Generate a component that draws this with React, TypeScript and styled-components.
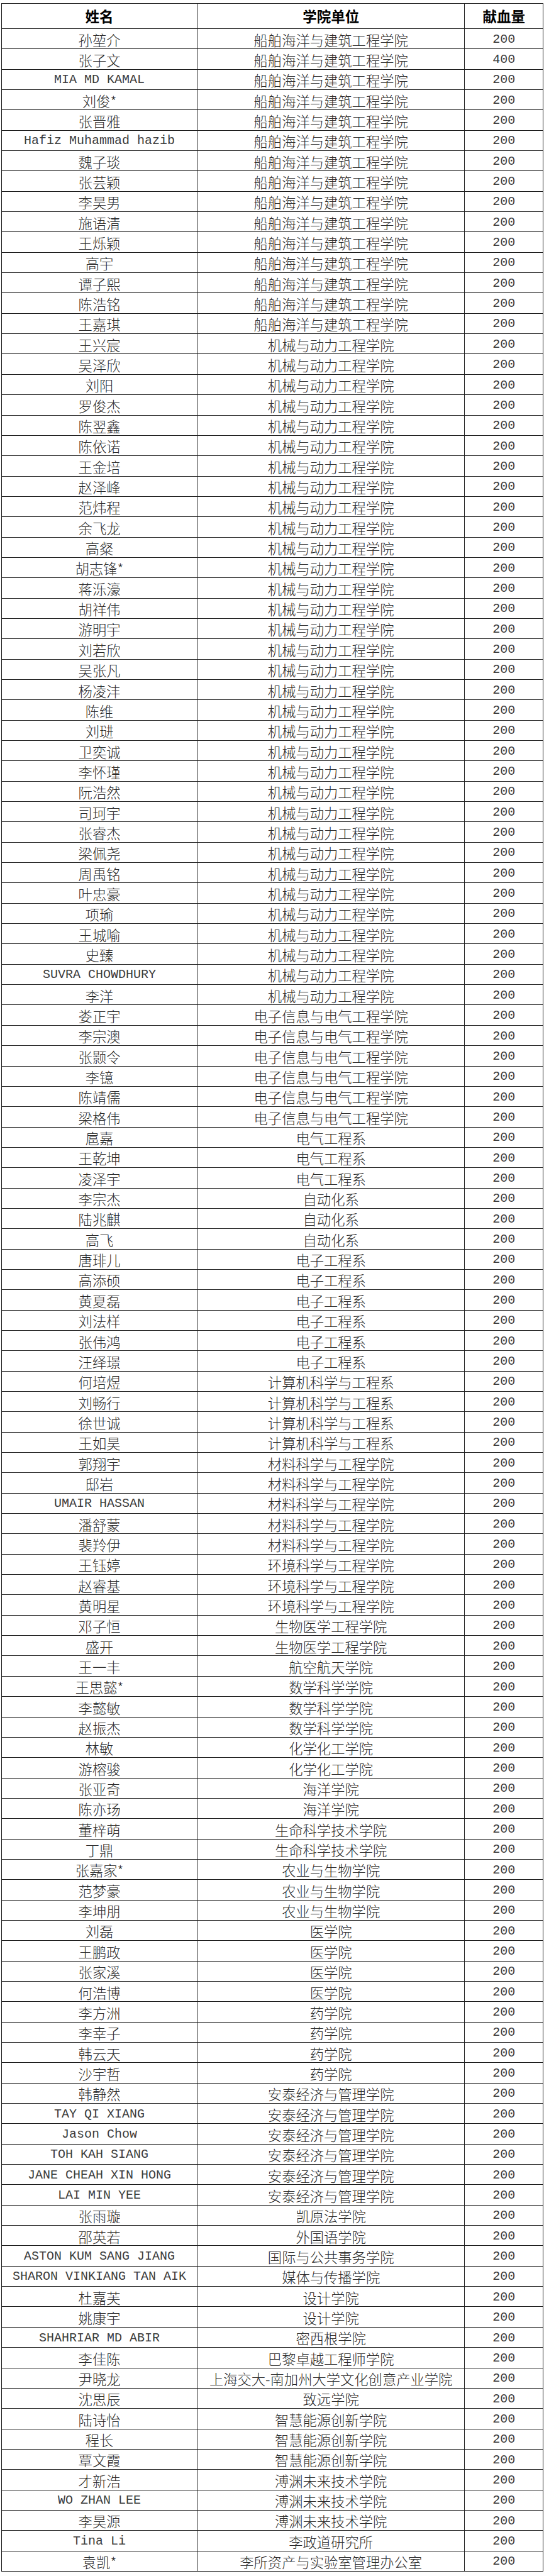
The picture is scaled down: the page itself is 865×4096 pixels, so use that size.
import React from "react";
import styled, { createGlobalStyle } from "styled-components";

const GlobalStyle = createGlobalStyle`
  html, body {
    margin: 0;
    padding: 0;
    background: #ffffff;
  }
  body {
    font-family: "Noto Sans CJK SC", sans-serif;
  }
`;

const Page = styled.div`
  padding: 4.6px 0 0 1.7px;
`;

const Table = styled.div`
  display: grid;
  grid-template-columns: 311.7px 424.6px 125.4px;
  grid-template-rows: 40.4px;
  grid-auto-rows: 32.35px;
  width: max-content;
  border-left: 1px solid #1e1e1e;
  border-top: 1px solid #1e1e1e;
`;

const HeadCell = styled.div`
  box-sizing: border-box;
  display: flex;
  align-items: center;
  justify-content: center;
  border-right: 1px solid #1e1e1e;
  border-bottom: 1px solid #1e1e1e;
  font-family: "Noto Sans CJK SC", sans-serif;
  font-weight: 700;
  font-size: 22.5px;
  line-height: 1;
  color: #000;
`;

const Cell = styled.div<{ $latin?: boolean }>`
  box-sizing: border-box;
  display: flex;
  align-items: center;
  justify-content: center;
  padding-top: 2px;
  border-right: 1px solid #1e1e1e;
  border-bottom: 1px solid #1e1e1e;
  font-family: ${(p) =>
    p.$latin
      ? `"Liberation Mono", "Noto Sans CJK SC", monospace`
      : `"Noto Sans CJK SC", sans-serif`};
  font-size: ${(p) => (p.$latin ? "20px" : "22.3px")};
  font-weight: ${(p) => (p.$latin ? 400 : 300)};
  line-height: 1;
  color: ${(p) => (p.$latin ? "#3c3c3c" : "#2a2a2a")};
  white-space: nowrap;
`;

const C1 = "船舶海洋与建筑工程学院";
const C2 = "机械与动力工程学院";
const C3 = "电子信息与电气工程学院";
const C4 = "电气工程系";
const C5 = "自动化系";
const C6 = "电子工程系";
const C7 = "计算机科学与工程系";
const C8 = "材料科学与工程学院";
const C9 = "环境科学与工程学院";
const C10 = "生物医学工程学院";
const C11 = "数学科学学院";
const C12 = "化学化工学院";
const C13 = "海洋学院";
const C14 = "生命科学技术学院";
const C15 = "农业与生物学院";
const C16 = "医学院";
const C17 = "药学院";
const C18 = "安泰经济与管理学院";
const C19 = "智慧能源创新学院";
const C20 = "溥渊未来技术学院";
const C21 = "设计学院";

type Row = [string, string, string?];

const rows: Row[] = [
  ["孙堃介", C1],
  ["张子文", C1, "400"],
  ["MIA MD KAMAL", C1],
  ["刘俊*", C1],
  ["张晋雅", C1],
  ["Hafiz Muhammad hazib", C1],
  ["魏子琰", C1],
  ["张芸颖", C1],
  ["李昊男", C1],
  ["施语清", C1],
  ["王烁颖", C1],
  ["高宇", C1],
  ["谭子熙", C1],
  ["陈浩铭", C1],
  ["王嘉琪", C1],
  ["王兴宸", C2],
  ["吴泽欣", C2],
  ["刘阳", C2],
  ["罗俊杰", C2],
  ["陈翌鑫", C2],
  ["陈依诺", C2],
  ["王金培", C2],
  ["赵泽峰", C2],
  ["范炜程", C2],
  ["余飞龙", C2],
  ["高粲", C2],
  ["胡志锋*", C2],
  ["蒋泺濠", C2],
  ["胡祥伟", C2],
  ["游明宇", C2],
  ["刘若欣", C2],
  ["吴张凡", C2],
  ["杨凌沣", C2],
  ["陈维", C2],
  ["刘琎", C2],
  ["卫奕诚", C2],
  ["李怀瑾", C2],
  ["阮浩然", C2],
  ["司珂宇", C2],
  ["张睿杰", C2],
  ["梁佩尧", C2],
  ["周禹铭", C2],
  ["叶忠豪", C2],
  ["项瑜", C2],
  ["王城喻", C2],
  ["史臻", C2],
  ["SUVRA CHOWDHURY", C2],
  ["李洋", C2],
  ["娄正宇", C3],
  ["李宗澳", C3],
  ["张颢令", C3],
  ["李镱", C3],
  ["陈靖儒", C3],
  ["梁格伟", C3],
  ["扈嘉", C4],
  ["王乾坤", C4],
  ["凌泽宇", C4],
  ["李宗杰", C5],
  ["陆兆麒", C5],
  ["高飞", C5],
  ["唐琲儿", C6],
  ["高添硕", C6],
  ["黄夏磊", C6],
  ["刘法样", C6],
  ["张伟鸿", C6],
  ["汪绎璟", C6],
  ["何培煜", C7],
  ["刘畅行", C7],
  ["徐世诚", C7],
  ["王如昊", C7],
  ["郭翔宇", C8],
  ["邸岩", C8],
  ["UMAIR HASSAN", C8],
  ["潘舒蒙", C8],
  ["裴羚伊", C8],
  ["王钰婷", C9],
  ["赵睿基", C9],
  ["黄明星", C9],
  ["邓子恒", C10],
  ["盛开", C10],
  ["王一丰", "航空航天学院"],
  ["王思懿*", C11],
  ["李懿敏", C11],
  ["赵振杰", C11],
  ["林敏", C12],
  ["游榕骏", C12],
  ["张亚奇", C13],
  ["陈亦玚", C13],
  ["董梓萌", C14],
  ["丁鼎", C14],
  ["张嘉家*", C15],
  ["范梦豪", C15],
  ["李坤朋", C15],
  ["刘磊", C16],
  ["王鹏政", C16],
  ["张家溪", C16],
  ["何浩博", C16],
  ["李方洲", C17],
  ["李幸子", C17],
  ["韩云天", C17],
  ["沙宇哲", C17],
  ["韩静然", C18],
  ["TAY QI XIANG", C18],
  ["Jason Chow", C18],
  ["TOH KAH SIANG", C18],
  ["JANE CHEAH XIN HONG", C18],
  ["LAI MIN YEE", C18],
  ["张雨璇", "凯原法学院"],
  ["邵英若", "外国语学院"],
  ["ASTON KUM SANG JIANG", "国际与公共事务学院"],
  ["SHARON VINKIANG TAN AIK", "媒体与传播学院"],
  ["杜嘉芙", C21],
  ["姚康宇", C21],
  ["SHAHRIAR MD ABIR", "密西根学院"],
  ["李佳陈", "巴黎卓越工程师学院"],
  ["尹晓龙", "上海交大-南加州大学文化创意产业学院"],
  ["沈思辰", "致远学院"],
  ["陆诗怡", C19],
  ["程长", C19],
  ["覃文霞", C19],
  ["才新浩", C20],
  ["WO ZHAN LEE", C20],
  ["李昊源", C20],
  ["Tina Li", "李政道研究所"],
  ["袁凯*", "李所资产与实验室管理办公室"],
];

const isLatin = (s: string) => /^[\x00-\x7F]+$/.test(s);

export default function App() {
  return (
    <Page>
      <GlobalStyle />
      <Table>
        <HeadCell>姓名</HeadCell>
        <HeadCell>学院单位</HeadCell>
        <HeadCell>献血量</HeadCell>
        {rows.map(([name, unit, amount = "200"], i) => (
          <React.Fragment key={i}>
            <Cell $latin={isLatin(name)}>{name}</Cell>
            <Cell>{unit}</Cell>
            <Cell $latin>{amount}</Cell>
          </React.Fragment>
        ))}
      </Table>
    </Page>
  );
}
